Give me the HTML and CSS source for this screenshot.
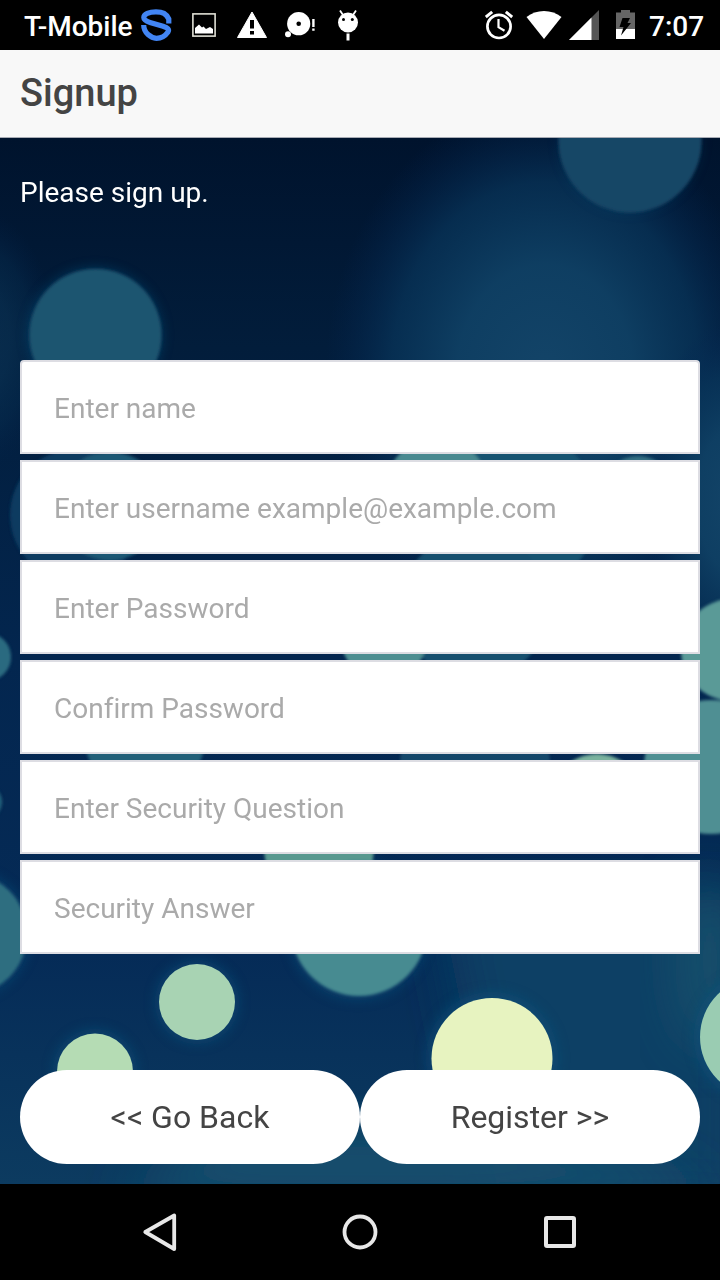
FILE: index.html
```html
<!DOCTYPE html>
<html lang="en">
<head>
<meta charset="utf-8">
<title>Signup</title>
<link rel="stylesheet" href="styles.css">
</head>
<body>
<div class="phone">
  <div class="status-bar">
    <div class="status-left">
      <span class="carrier">T-Mobile</span>
      <svg width="32" height="50" viewBox="141 0 32 50" fill="none" stroke="#4285f4" stroke-width="5.2"><path d="M168.800 23.500V19C166 13.500 163 11.900 156 11.900C149 11.900 143.800 14.200 143.800 17.600C143.800 20 146 21.200 150 22.400L163 26.300C168 28 169.500 29.500 168 32C164.500 37 160 38.300 156.500 38.300C151 38 143.700 33 143.700 25"/></svg>
      <svg width="25" height="50" viewBox="192 0 25 50"><rect x="192.900" y="13.900" width="22.200" height="22.200" fill="none" stroke="#e0e0d6" stroke-width="1.600"/><path d="M195 33.500V28L199 24.500L202 27.500L203.500 26.500L206 29L210 27L213 29V33.500Z" fill="#fff"/></svg>
      <svg width="31" height="50" viewBox="237 0 31 50"><path d="M252 12L266.500 37.500H237.500Z" fill="#fff" stroke="#fff" stroke-linejoin="round"/><path d="M250 20h4v8.500h-4zM250 31h4v3.500h-4z" fill="#000"/></svg>
      <svg width="31" height="50" viewBox="285 0 31 50" fill="#fff"><circle cx="298.700" cy="23.700" r="11.600"/><circle cx="298.700" cy="23.800" r="2.300" fill="#000"/><circle cx="288" cy="34.300" r="3"/><path d="M312.200 19h2.400v8h-2.400zM312.200 28.500h2.400v2.200h-2.400z"/></svg>
      <svg width="20" height="50" viewBox="338 0 20 50"><circle cx="348" cy="22.500" r="10" fill="#fff"/><path d="M343 15L340 10.500M353 15L356 10.500" stroke="#fff" stroke-width="1.800"/><path d="M348 33.500v7" stroke="#fff" stroke-width="3"/><circle cx="343.500" cy="19.500" r="1.500"/><circle cx="352.300" cy="19.500" r="1.500"/></svg>
    </div>
    <div class="status-right">
      <svg width="28" height="50" viewBox="485 0 28 50" fill="none" stroke="#fff"><circle cx="499" cy="26.400" r="11.600" stroke-width="2.700"/><path d="M498.500 19V27.200L504.500 30.700" stroke-width="2.200"/><path d="M485.800 17L492.200 11.800M505.800 11.800L512.200 17" stroke-width="3"/></svg>
      <svg width="36" height="50" viewBox="526 0 36 50"><path d="M526.500 17C536 9 552 9 561.500 17L544 39Z" fill="#fff"/></svg>
      <svg width="31" height="50" viewBox="569 0 31 50"><path d="M599 10V40H569Z" fill="#555"/><path d="M591.500 17.500V40H569Z" fill="#fff"/></svg>
      <svg width="19" height="50" viewBox="616 0 19 50"><path d="M616 12.500h5V10h9v2.500h5V39h-19Z" fill="#666"/><path d="M616 29h19v10h-19z" fill="#fff"/><path d="M622.500 18H630L627.500 23H631L621 35.500L623.500 27H619.500Z"/></svg>
      <span class="clock">7:07</span>
    </div>
  </div>
  <header class="title-bar"><h1 class="title">Signup</h1></header>
  <main class="content">
    <svg class="bokeh" width="720" height="1046" viewBox="0 138 720 1046" preserveAspectRatio="none">
      <defs>
        <linearGradient id="base" x1="0" y1="0" x2="0" y2="1"><stop offset="0" stop-color="#00132d"/><stop offset=".2" stop-color="#021d3b"/><stop offset=".5" stop-color="#03264f"/><stop offset=".78" stop-color="#052b57"/><stop offset="1" stop-color="#0c3b60"/></linearGradient>
        <radialGradient id="haze"><stop offset="0" stop-color="#134468"/><stop offset=".4" stop-color="#0f4064" stop-opacity=".95"/><stop offset=".7" stop-color="#083459" stop-opacity=".75"/><stop offset="1" stop-color="#032450" stop-opacity="0"/></radialGradient>
        <filter id="soft" x="-20%" y="-20%" width="140%" height="140%"><feGaussianBlur stdDeviation="1.700"/></filter>
        <filter id="edge" x="-20%" y="-20%" width="140%" height="140%"><feGaussianBlur stdDeviation=".7"/></filter>
        <filter id="glow" x="-30%" y="-30%" width="160%" height="160%"><feGaussianBlur stdDeviation="6"/></filter>
        <filter id="mist" x="-50%" y="-50%" width="200%" height="200%"><feGaussianBlur stdDeviation="25"/></filter>
      </defs>
      <rect y="138" width="720" height="1046" fill="url(#base)"/>
      <ellipse cx="545" cy="375" rx="220" ry="275" fill="url(#haze)"/>
      <ellipse cx="-20" cy="340" rx="75" ry="130" fill="url(#haze)" opacity=".4"/>
      <ellipse cx="735" cy="500" rx="95" ry="180" fill="url(#haze)"/>
      <path d="M440 900H740V1200H500Z" fill="#104165" filter="url(#mist)"/>
      <ellipse cx="710" cy="960" rx="35" ry="90" fill="#1a5a71" opacity=".6" filter="url(#mist)"/>
      <path d="M120 1200L220 1130H500L640 1160L720 1200Z" fill="#17506e" filter="url(#mist)"/>
      <g filter="url(#glow)" opacity=".5" fill="#10527e">
        <circle cx="95" cy="335" r="67"/><circle cx="630" cy="141" r="71" opacity=".5"/><circle cx="197" cy="1002" r="42"/><circle cx="95" cy="1071" r="42"/><circle cx="492" cy="1058" r="66"/><circle cx="358" cy="930" r="70"/><circle cx="-34" cy="934" r="64"/><circle cx="760" cy="1037" r="66"/>
      </g>
      <g filter="url(#soft)">
        <circle cx="95.500" cy="335" r="66" fill="#1b5470"/>
        <circle cx="630" cy="141" r="71.500" fill="#144666"/>
        <circle cx="76" cy="515" r="66" fill="#0b3a60"/>
        <circle cx="520" cy="510" r="78" fill="#195371"/>
        <circle cx="437" cy="490" r="52" fill="#4a8990"/>
        <circle cx="638" cy="493" r="37" fill="#356f83"/>
        <circle cx="110" cy="506" r="54" fill="#1d5974"/>
        <circle cx="475" cy="606" r="74" fill="#16506e"/>
        <circle cx="384" cy="638" r="43" fill="#4d8e91"/>
        <circle cx="-13" cy="657" r="24" fill="#296b80"/>
        <circle cx="-15" cy="802" r="17" fill="#24627b"/>
        <circle cx="145" cy="735" r="61" fill="#246079"/>
        <circle cx="475" cy="765" r="75" fill="#195475" opacity=".7"/>
        <circle cx="711" cy="767" r="67" fill="#508f93"/>
        <circle cx="732" cy="650" r="51" fill="#5a9a97"/>
        <circle cx="319" cy="848" r="55" fill="#59988f"/>
        <circle cx="-34" cy="934" r="61" fill="#2d6e80"/>
        <circle cx="359" cy="928" r="68" fill="#478b91"/>
        <circle cx="597" cy="802" r="48" fill="#7ab29e"/>
      </g>
      <g filter="url(#edge)">
        <circle cx="197" cy="1002" r="38" fill="#a8d3b3"/>
        <circle cx="95" cy="1071.500" r="38" fill="#b5dcb4"/>
        <circle cx="492" cy="1058.500" r="60.500" fill="#e7f3c0"/>
        <circle cx="760" cy="1037" r="60" fill="#9accb2"/>
      </g>
    </svg>
    <p class="intro">Please sign up.</p>
    <form class="form">
      <input class="field field-first" type="text" placeholder="Enter name">
      <input class="field" type="text" placeholder="Enter username example@example.com">
      <input class="field" type="password" placeholder="Enter Password">
      <input class="field" type="password" placeholder="Confirm Password">
      <input class="field" type="text" placeholder="Enter Security Question">
      <input class="field" type="text" placeholder="Security Answer">
    </form>
    <div class="actions">
      <button class="action" type="button">&lt;&lt; Go Back</button>
      <button class="action" type="button">Register &gt;&gt;</button>
    </div>
  </main>
  <nav class="nav-bar">
    <svg width="40" height="40" viewBox="140 1212 40 40" fill="none" stroke="#e8e8e8" stroke-width="3.800" stroke-linejoin="round"><path d="M174.200 1215.500V1249L145.300 1232Z"/></svg>
    <svg width="40" height="40" viewBox="340 1212 40 40" fill="none" stroke="#e8e8e8" stroke-width="3.800"><circle cx="360" cy="1232" r="15.500"/></svg>
    <svg width="40" height="40" viewBox="540 1212 40 40" fill="none" stroke="#e8e8e8" stroke-width="4"><rect x="546" y="1218" width="28" height="28" rx="1"/></svg>
  </nav>
</div>
</body>
</html>
```
FILE: styles.css
```css
* { box-sizing: border-box; }
body { margin: 0; background: #000; font-family: Roboto, sans-serif; }
.phone { width: 720px; height: 1280px; display: flex; flex-direction: column; overflow: hidden; }
.status-bar { height: 50px; background: #000; color: #fff; display: flex; justify-content: space-between; padding: 0 16px 0 24px; font-size: 28px; font-weight: 500; line-height: 53px; }
.status-left, .status-right { display: flex; }
.carrier { width: 117px; white-space: nowrap; }
.status-left svg + svg { margin-left: 20px; }
.status-left svg:nth-of-type(4) { margin-left: 17px; }
.status-left svg:nth-of-type(5) { margin-left: 22px; }
.status-left svg:nth-of-type(2) { margin-left: 19px; }
.status-right svg:nth-of-type(2) { margin-left: 13px; }
.status-right svg:nth-of-type(3) { margin-left: 7px; }
.status-right svg:nth-of-type(4) { margin-left: 16px; }
.clock { width: 55px; margin-left: 14px; white-space: nowrap; }
.title-bar { height: 88px; background: #f8f8f8; border-bottom: 1px solid #a8acb5; padding: 0 20px; }
.title { margin: 0; font-size: 38px; font-weight: 500; line-height: 86px; color: #444; }
.content { position: relative; height: 1046px; padding: 35px 20px 20px; display: flex; flex-direction: column; overflow: hidden; }
.bokeh { position: absolute; inset: 0; }
.intro, .form, .actions { position: relative; }
.intro { margin: 0 0 147px; font-size: 28px; line-height: 40px; color: #fff; }
.form { display: flex; flex-direction: column; gap: 6px; }
.field { height: 94px; width: 100%; border: 2px solid #dddde3; border-radius: 0; background: #fff; padding: 2px 32px 0; font: 28px Roboto, sans-serif; font-variant-ligatures: none; color: #444; }
.field-first { border-radius: 4px 4px 0 0; }
.field::placeholder { color: #aaa; opacity: 1; }
.actions { display: flex; margin-top: auto; }
.action { flex: 1; height: 94px; border: 0; border-radius: 47px; background: #fff; color: #444; font: 32px Roboto, sans-serif; padding: 0; }
.nav-bar { height: 96px; background: #000; display: flex; justify-content: center; align-items: center; gap: 160px; }
```
